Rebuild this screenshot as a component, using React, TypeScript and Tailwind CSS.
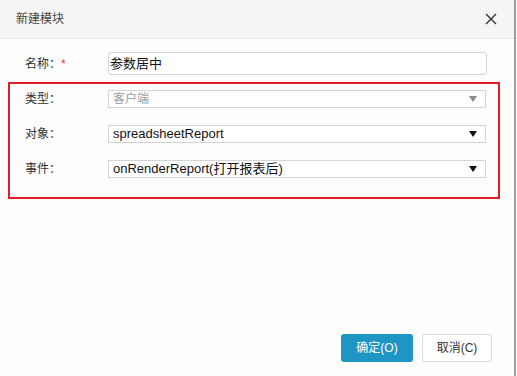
import React from "react";

const cn = '"Liberation Sans", "Noto Sans CJK SC", sans-serif';

function Arrow({ disabled }: { disabled?: boolean }) {
    return (
        <svg width="8" height="6" viewBox="0 0 8 6" className="shrink-0">
            <path d="M0 0 H8 L4 6 Z" fill={disabled ? "#8a8a8a" : "#111111"} />
        </svg>
    );
}

function SelectRow({ label, value, disabled }: { label: string; value: string; disabled?: boolean }) {
    return (
        <div className="flex items-center">
            <div className="w-[83px] text-[12px] text-[#333]">{label}</div>
            <div className="flex h-[18px] w-[378px] items-center justify-between border border-[#d4d4d4] bg-white pl-[4px] pr-[8px]">
                <span className={disabled ? "text-[12px] text-[#9a9a9a]" : "text-[13px] text-[#111]"}>{value}</span>
                <Arrow disabled={disabled} />
            </div>
        </div>
    );
}

export default function App() {
    return (
        <div className="flex h-[376px] w-[517px] bg-[#fdfdfd]" style={{ fontFamily: cn }}>
            <div className="flex w-[516px] flex-col border-r-2 border-[#9d9d9d]">
                <div className="flex h-[39px] items-center justify-between border-b border-[#e8e8e8] bg-[#f5f5f5] pl-[16px] pr-[17px]">
                    <span className="text-[12px] text-[#444]">新建模块</span>
                    <svg width="12" height="12" viewBox="0 0 12 12">
                        <path d="M1 1 L11 11 M11 1 L1 11" stroke="#333" strokeWidth="1.4" />
                    </svg>
                </div>

                <div className="ml-[25px] mt-[13px] flex items-center">
                    <div className="w-[83px] text-[12px] text-[#333]">
                        名称：<span className="text-[#e53935]">*</span>
                    </div>
                    <div className="flex h-[23px] w-[379px] items-center rounded-[3px] border border-[#d4d4d4] bg-white pl-[1px] text-[13px] text-[#111]">
                        参数居中
                    </div>
                </div>

                <div className="ml-[8px] mt-[7px] flex h-[117px] w-[492px] flex-col gap-[17px] border-2 border-[#e41e26] pl-[15px] pt-[6px]">
                    <SelectRow label="类型：" value="客户端" disabled />
                    <SelectRow label="对象：" value="spreadsheetReport" />
                    <SelectRow label="事件：" value="onRenderReport(打开报表后)" />
                </div>

                <div className="mt-auto flex justify-end gap-[9px] pb-[14px] pr-[22px]">
                    <button className="h-[28px] w-[72px] rounded-[3px] bg-[#1f95c4] text-[12px] text-white">确定(O)</button>
                    <button className="h-[28px] w-[70px] rounded-[3px] border border-[#dcdcdc] bg-white text-[12px] text-[#333]">取消(C)</button>
                </div>
            </div>
        </div>
    );
}
